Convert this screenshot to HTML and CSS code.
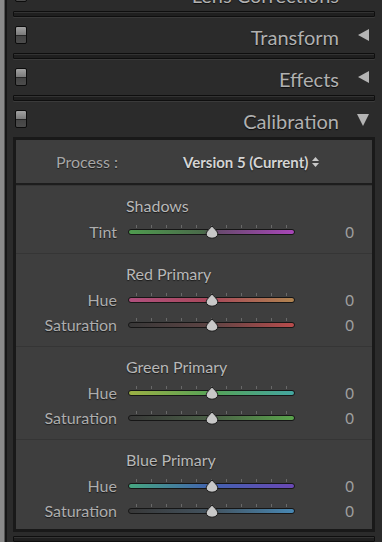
FILE: index.html
```html
<!DOCTYPE html>
<html lang="en">
<head>
  <meta charset="UTF-8" />
  <title>Calibration</title>
  <link rel="stylesheet" href="styles.css">
</head>
<body>
  <div class="app">
    <div class="edge"></div>
    <div class="panels">
      <div class="head">
        <span class="switch"></span>
        <span class="title">Lens Corrections</span>
        <svg class="arrow" width="12" height="12" viewBox="0 0 12 12"><polygon points="12,0 12,12 1,6"/></svg>
      </div>
      <div class="sep"></div>
      <div class="head">
        <span class="switch"></span>
        <span class="title">Transform</span>
        <svg class="arrow" width="12" height="12" viewBox="0 0 12 12"><polygon points="12,0 12,12 1,6"/></svg>
      </div>
      <div class="sep"></div>
      <div class="head">
        <span class="switch"></span>
        <span class="title">Effects</span>
        <svg class="arrow" width="12" height="12" viewBox="0 0 12 12"><polygon points="12,0 12,12 1,6"/></svg>
      </div>
      <div class="sep"></div>
      <div class="head">
        <span class="switch"></span>
        <span class="title">Calibration</span>
        <svg class="arrow" width="12" height="13" viewBox="0 0 12 13"><polygon points="0,1 12,1 6,13"/></svg>
      </div>

      <div class="box">
        <div class="process">
          <span class="process-label">Process :</span>
          <span class="process-value">Version 5 (Current)</span>
          <svg class="updown" width="7" height="10" viewBox="0 0 7 10"><polygon points="3.5,0 7,4 0,4"/><polygon points="0,6 7,6 3.5,10"/></svg>
        </div>

        <div class="group">
          <div class="group-title">Shadows</div>
          <div class="row">
            <span class="label">Tint</span>
            <div class="slider">
              <span class="ticks"></span>
              <div class="track tint"></div>
              <svg class="thumb" width="14" height="14" viewBox="0 0 14 14"><path d="M7 0.8 C8.2 3 12.8 6.2 12.8 8.8 C12.8 11.6 10 13.2 7 13.2 C4 13.2 1.2 11.6 1.2 8.8 C1.2 6.2 5.8 3 7 0.8 Z"/></svg>
            </div>
            <span class="value">0</span>
          </div>
        </div>

        <div class="group">
          <div class="group-title">Red Primary</div>
          <div class="row">
            <span class="label">Hue</span>
            <div class="slider">
              <span class="ticks"></span>
              <div class="track red-hue"></div>
              <svg class="thumb" width="14" height="14" viewBox="0 0 14 14"><path d="M7 0.8 C8.2 3 12.8 6.2 12.8 8.8 C12.8 11.6 10 13.2 7 13.2 C4 13.2 1.2 11.6 1.2 8.8 C1.2 6.2 5.8 3 7 0.8 Z"/></svg>
            </div>
            <span class="value">0</span>
          </div>
          <div class="row">
            <span class="label">Saturation</span>
            <div class="slider">
              <span class="ticks"></span>
              <div class="track red-sat"></div>
              <svg class="thumb" width="14" height="14" viewBox="0 0 14 14"><path d="M7 0.8 C8.2 3 12.8 6.2 12.8 8.8 C12.8 11.6 10 13.2 7 13.2 C4 13.2 1.2 11.6 1.2 8.8 C1.2 6.2 5.8 3 7 0.8 Z"/></svg>
            </div>
            <span class="value">0</span>
          </div>
        </div>

        <div class="group">
          <div class="group-title">Green Primary</div>
          <div class="row">
            <span class="label">Hue</span>
            <div class="slider">
              <span class="ticks"></span>
              <div class="track green-hue"></div>
              <svg class="thumb" width="14" height="14" viewBox="0 0 14 14"><path d="M7 0.8 C8.2 3 12.8 6.2 12.8 8.8 C12.8 11.6 10 13.2 7 13.2 C4 13.2 1.2 11.6 1.2 8.8 C1.2 6.2 5.8 3 7 0.8 Z"/></svg>
            </div>
            <span class="value">0</span>
          </div>
          <div class="row">
            <span class="label">Saturation</span>
            <div class="slider">
              <span class="ticks"></span>
              <div class="track green-sat"></div>
              <svg class="thumb" width="14" height="14" viewBox="0 0 14 14"><path d="M7 0.8 C8.2 3 12.8 6.2 12.8 8.8 C12.8 11.6 10 13.2 7 13.2 C4 13.2 1.2 11.6 1.2 8.8 C1.2 6.2 5.8 3 7 0.8 Z"/></svg>
            </div>
            <span class="value">0</span>
          </div>
        </div>

        <div class="group">
          <div class="group-title">Blue Primary</div>
          <div class="row">
            <span class="label">Hue</span>
            <div class="slider">
              <span class="ticks"></span>
              <div class="track blue-hue"></div>
              <svg class="thumb" width="14" height="14" viewBox="0 0 14 14"><path d="M7 0.8 C8.2 3 12.8 6.2 12.8 8.8 C12.8 11.6 10 13.2 7 13.2 C4 13.2 1.2 11.6 1.2 8.8 C1.2 6.2 5.8 3 7 0.8 Z"/></svg>
            </div>
            <span class="value">0</span>
          </div>
          <div class="row">
            <span class="label">Saturation</span>
            <div class="slider">
              <span class="ticks"></span>
              <div class="track blue-sat"></div>
              <svg class="thumb" width="14" height="14" viewBox="0 0 14 14"><path d="M7 0.8 C8.2 3 12.8 6.2 12.8 8.8 C12.8 11.6 10 13.2 7 13.2 C4 13.2 1.2 11.6 1.2 8.8 C1.2 6.2 5.8 3 7 0.8 Z"/></svg>
            </div>
            <span class="value">0</span>
          </div>
        </div>
      </div>

      <div class="sep after"></div>
    </div>
  </div>
</body>
</html>
```

FILE: styles.css
```css
* { margin: 0; padding: 0; box-sizing: border-box; }
html, body { width: 382px; height: 542px; overflow: hidden; }
body { background: #2b2b2b; font-family: Lato, 'Noto Sans', sans-serif; color: #b2b2b2; }

.app { display: flex; height: 542px; }
.edge { width: 7px; flex: none; background: linear-gradient(to right, #8a8a8a 0 4px, #555 4px 5px, #161616 5px 7px); }
.panels { flex: 1; padding: 0 7px 0 6px; margin-top: -25px; }

/* collapsed panel headers */
.head { height: 36px; display: flex; align-items: center; padding: 0 6px 0 2px; }
.switch { width: 12px; height: 18px; border: 1px solid #0c0c0c; border-radius: 2px; background: linear-gradient(#a2a2a2, #7c7c7c 48%, #262626 48%, #262626 55%, #444 55%, #4c4c4c); }
.title { margin-left: auto; font-size: 20px; color: #b0b0b0; text-shadow: 0 1px 1px rgba(0,0,0,0.7); padding-top: 3px; }
.arrow { margin-left: 18px; fill: #b4b4b4; }
.sep { height: 6px; border: 1px solid #0e0e0e; border-radius: 1px; background: #1f1f1f; box-shadow: inset 0 1px 0 #333, 0 1px 0 #3a3a3a; }
.sep.after { margin-top: 4px; }

/* expanded calibration box */
.box { border: 3px solid #191919; background: #3e3e3e; }
.process { height: 45px; display: flex; align-items: center; border-bottom: 2px solid #1d1d1d; }
.process-label { width: 102px; text-align: right; font-size: 16px; color: #a6a6a6; text-shadow: 0 1px 1px rgba(0,0,0,0.6); }
.process-value { margin-left: 65px; font-size: 15px; font-weight: bold; color: #d4d4d4; text-shadow: 0 1px 1px rgba(0,0,0,0.6); }
.updown { margin-left: 4px; fill: #c8c8c8; }

.group { padding: 8px 0 9px; border-top: 1px solid #353535; }
.group:first-of-type { border-top: none; }
.group:last-child { padding-bottom: 6px; }
.group-title { height: 24px; line-height: 24px; padding-left: 110px; margin-bottom: 1px; font-size: 16px; color: #b8b8b8; text-shadow: 0 1px 1px rgba(0,0,0,0.6); }

.row { height: 25px; display: flex; align-items: center; }
.label { width: 101px; text-align: right; font-size: 16px; color: #adadad; text-shadow: 0 1px 1px rgba(0,0,0,0.6); }
.value { width: 59px; text-align: right; font-size: 15px; color: #a0a0a0; }

.slider { position: relative; width: 167px; height: 25px; margin-left: 11px; }
.ticks { position: absolute; left: 8px; top: 6px; width: 151px; height: 3px; background: repeating-linear-gradient(to right, #686868 0 1px, transparent 1px 15px); }
.track { margin-top: 10px; height: 6px; border: 1px solid #161616; border-radius: 3px; }
.thumb { position: absolute; left: 77px; top: 6px; }
.thumb path { fill: #c8c8c8; stroke: #1c1c1c; stroke-width: 1; }

.tint { background: linear-gradient(to right, #4f9c4f, #4a6a4a 45%, #4e4e4e 50%, #6a4a70 55%, #a846b8); }
.red-hue { background: linear-gradient(to right, #b0507e, #a8485a 50%, #b08450); }
.red-sat { background: linear-gradient(to right, #383838, #5e4444 50%, #b84c4c); }
.green-hue { background: linear-gradient(to right, #9cb044, #56a256 50%, #44a6a0); }
.green-sat { background: linear-gradient(to right, #383838, #4a6046 50%, #5aa44c); }
.blue-hue { background: linear-gradient(to right, #46a680, #4262b0 50%, #6a48b4); }
.blue-sat { background: linear-gradient(to right, #383838, #43535f 50%, #4888b4); }
```
